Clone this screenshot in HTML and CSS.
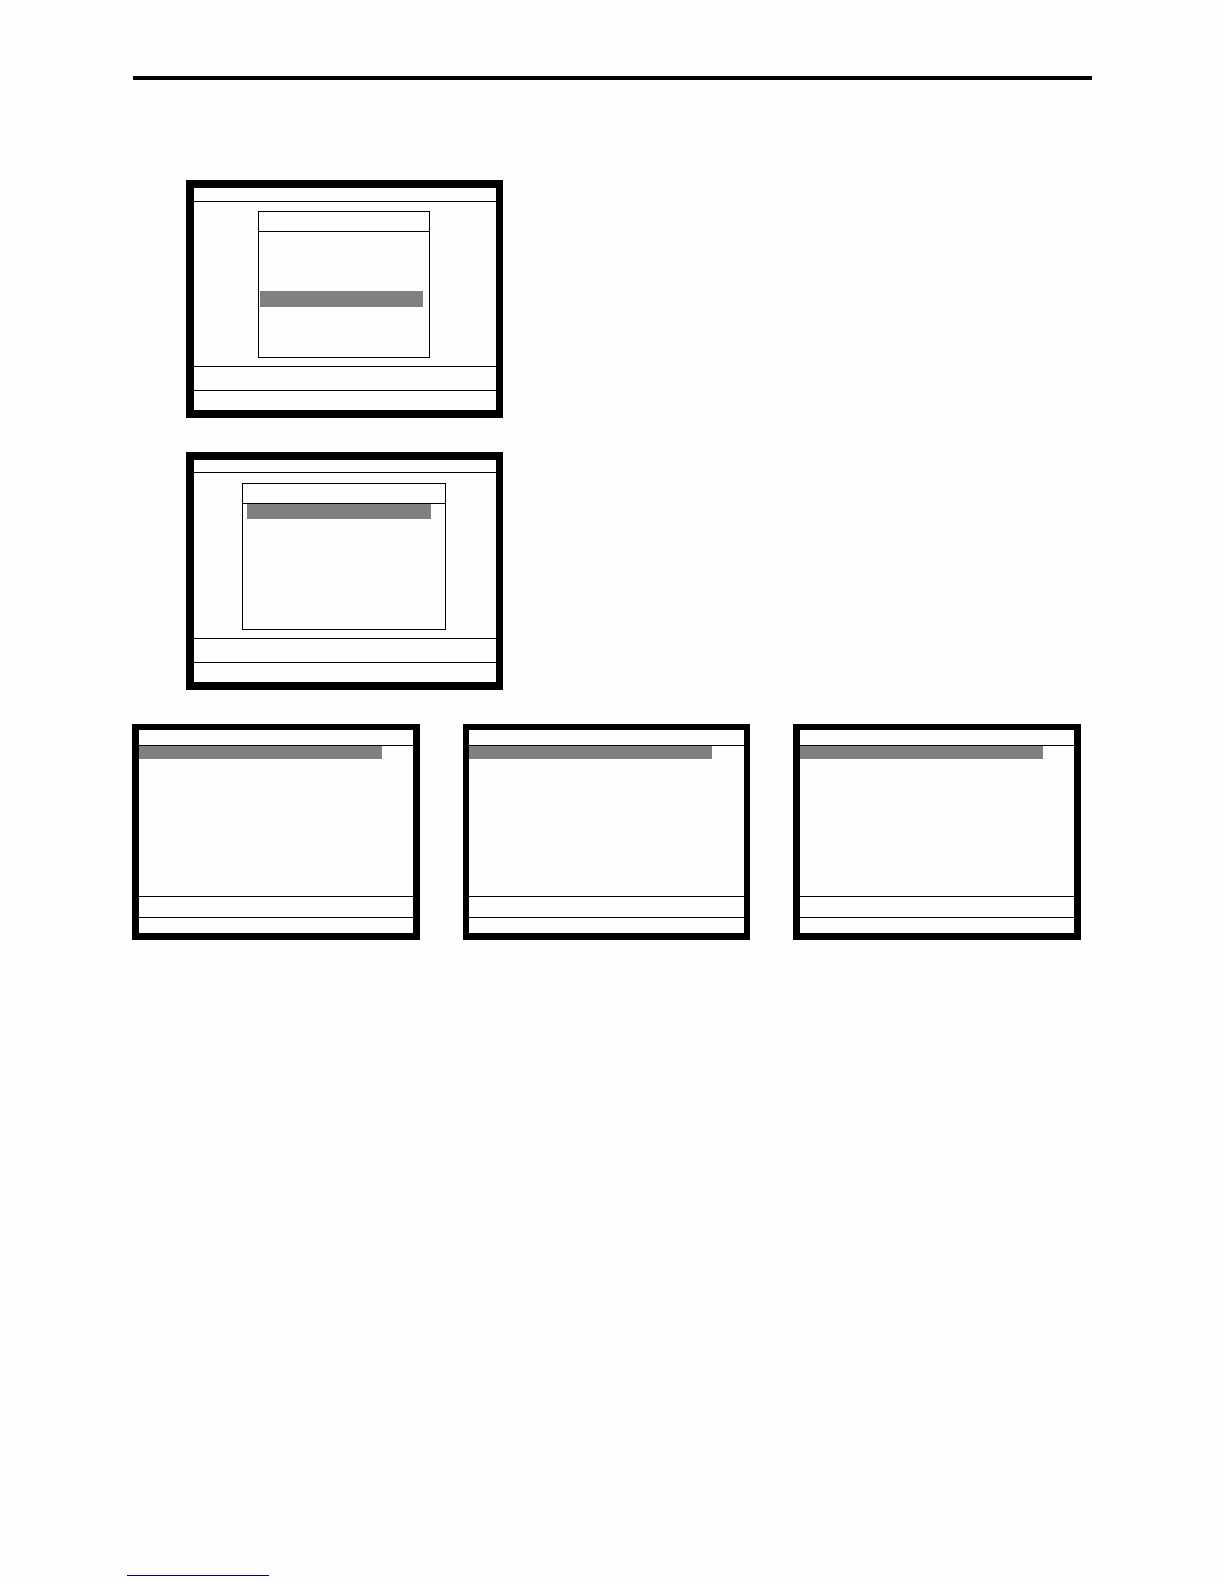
FILE: index.html
```html
<!DOCTYPE html>
<html lang="en">
<head>
    <meta charset="UTF-8">
    <meta name="viewport" content="width=device-width, initial-scale=1.0">
    <title>Menu Screens</title>
    <link rel="stylesheet" href="styles.css">
</head>
<body>
    <header class="page-header"></header>

    <main>
        <section class="menu-screens">
            <div class="screen">
                <div class="screen-title"></div>
                <div class="screen-body">
                    <div class="window window-narrow">
                        <div class="window-title"></div>
                        <div class="selected"></div>
                    </div>
                </div>
                <div class="screen-message"></div>
                <div class="screen-keys"></div>
            </div>

            <div class="screen screen-submenu">
                <div class="screen-title"></div>
                <div class="screen-body">
                    <div class="window window-wide">
                        <div class="window-title"></div>
                        <div class="selected"></div>
                    </div>
                </div>
                <div class="screen-message"></div>
                <div class="screen-keys"></div>
            </div>
        </section>

        <section class="list-screens">
            <div class="screen small">
                <div class="screen-title"></div>
                <div class="screen-body"><div class="selected"></div></div>
                <div class="screen-message"></div>
                <div class="screen-keys"></div>
            </div>
            <div class="screen small middle">
                <div class="screen-title"></div>
                <div class="screen-body"><div class="selected"></div></div>
                <div class="screen-message"></div>
                <div class="screen-keys"></div>
            </div>
            <div class="screen small">
                <div class="screen-title"></div>
                <div class="screen-body"><div class="selected"></div></div>
                <div class="screen-message"></div>
                <div class="screen-keys"></div>
            </div>
        </section>
    </main>

    <footer>
        <a class="footer-link" href="#" aria-label="Back to top"></a>
    </footer>
</body>
</html>
```

FILE: styles.css
```css
* {
    box-sizing: border-box;
}

body {
    display: flex;
    flex-direction: column;
    min-height: 100vh;
    margin: 0;
    padding: 76px 132px 8px 127px;
    background-color: #fefefe;
    font-family: "Liberation Sans", Arial, sans-serif;
}

.page-header {
    margin-left: 6px;
    border-top: 4px solid #000;
}

main {
    margin: 100px 11px 0 5px;
}

/* screens with a popup window */
.menu-screens {
    display: flex;
    flex-direction: column;
    gap: 34px;
    padding-left: 54px;
    margin-bottom: 34px;
}

.screen {
    display: flex;
    flex-direction: column;
    width: 317px;
    max-width: 100%;
    border: 8px solid #000;
    border-right-width: 7px;
}

.screen-title {
    height: 14px;
    border-bottom: 1px solid #000;
}

.screen-submenu .screen-title {
    height: 13px;
}

.screen-body {
    display: flex;
    justify-content: center;
    padding: 9px 2px 8px 0;
}

.screen-submenu .screen-body {
    padding-top: 10px;
}

.screen-message {
    height: 24px;
    border-top: 1px solid #000;
}

.screen-keys {
    height: 20px;
    border-top: 1px solid #000;
}

.window {
    height: 147px;
    border: 1px solid #000;
}

.window-narrow {
    width: 172px;
}

.window-wide {
    width: 204px;
}

.window-title {
    height: 20px;
    border-bottom: 1px solid #000;
}

.selected {
    background-color: #808080;
}

.window-narrow .selected {
    height: 16px;
    margin: 59px 6px 0 1px;
}

.window-wide .selected {
    height: 15px;
    margin: 0 14px 0 4px;
}

/* row of smaller screens */
.list-screens {
    display: flex;
    justify-content: space-between;
    gap: 16px;
}

.small {
    width: 288px;
    border-width: 6px 7px 7px;
}

.middle {
    width: 287px;
    border-left-width: 6px;
    border-right-width: 6px;
}

.small .screen-title {
    height: 16px;
}

.small .screen-body {
    display: block;
    height: 150px;
    padding: 0;
}

.small .selected {
    width: 243px;
    max-width: 100%;
    height: 13px;
}

.small .screen-message {
    height: 21px;
}

.small .screen-keys {
    height: 16px;
}

footer {
    margin-top: auto;
}

.footer-link {
    display: block;
    width: 142px;
    border-bottom: 1px solid #000080;
}
```
